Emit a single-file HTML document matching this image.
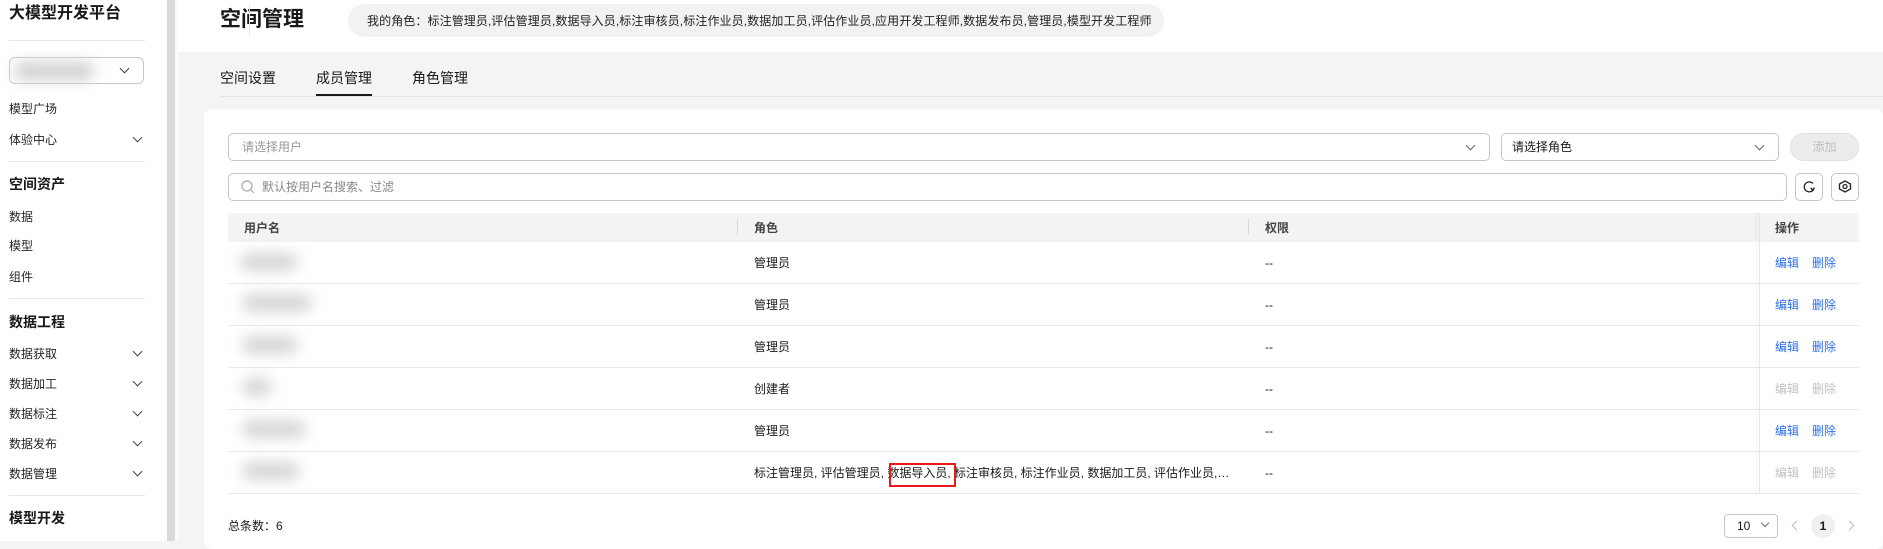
<!DOCTYPE html>
<html><head><meta charset="utf-8"><style>
*{margin:0;padding:0;box-sizing:border-box}
body{width:1883px;height:541px;overflow:hidden;background:#f4f4f4;font-family:"Liberation Sans","Noto Sans CJK SC",sans-serif;color:#191919;position:relative}
.a{position:absolute}
.sb{left:0;top:0;width:167px;height:541px;background:#fff}
.bar{left:167px;top:0;width:8px;height:541px;background:#dadada}
.bar2{left:175px;top:0;width:4px;height:541px;background:#fbfbfb}
.it{position:absolute;left:9px;font-size:12px;line-height:16px;color:#252525}
.gp{position:absolute;left:9px;font-size:14px;font-weight:bold;line-height:18px}
.dv{position:absolute;left:9px;width:136px;height:1px;background:#e6e6e6}
.chev{position:absolute;width:7px;height:7px;border-right:1.3px solid #444;border-bottom:1.3px solid #444;transform:rotate(45deg)}
.hdr{left:179px;top:0;width:1704px;height:52px;background:#fff}
.ln{position:absolute;height:1px;background:#e9e9e9}
.blur{position:absolute;height:18px;background:#d6d6d6;filter:blur(7px);border-radius:9px}
.cell{position:absolute;font-size:12px;line-height:16px}
.ed{position:absolute;font-size:12px;line-height:16px;color:#2b6ff0}
.dis{color:#c2c2c2}
</style></head><body>
<div class="a sb">
 <div class="a" style="left:9px;top:4px;font-size:16px;font-weight:bold;line-height:20px">大模型开发平台</div>
 <div class="dv" style="top:40px"></div>
 <div class="a" style="left:9px;top:57px;width:135px;height:27px;border:1px solid #c8c8c8;border-radius:6px"></div>
 <div class="blur" style="left:14px;top:61px;width:80px;height:20px;background:#d4d4d4"></div>
 <div class="chev" style="left:121px;top:65px"></div>
 <div class="it" style="top:101px">模型广场</div>
 <div class="it" style="top:132px">体验中心</div><div class="chev" style="left:134px;top:134px"></div>
 <div class="dv" style="top:161px"></div>
 <div class="gp" style="top:175px">空间资产</div>
 <div class="it" style="top:209px">数据</div>
 <div class="it" style="top:238px">模型</div>
 <div class="it" style="top:269px">组件</div>
 <div class="dv" style="top:298px"></div>
 <div class="gp" style="top:313px">数据工程</div>
 <div class="it" style="top:346px">数据获取</div><div class="chev" style="left:134px;top:348px"></div>
 <div class="it" style="top:376px">数据加工</div><div class="chev" style="left:134px;top:378px"></div>
 <div class="it" style="top:406px">数据标注</div><div class="chev" style="left:134px;top:408px"></div>
 <div class="it" style="top:436px">数据发布</div><div class="chev" style="left:134px;top:438px"></div>
 <div class="it" style="top:466px">数据管理</div><div class="chev" style="left:134px;top:468px"></div>
 <div class="dv" style="top:495px"></div>
 <div class="gp" style="top:509px">模型开发</div>
</div>
<div class="a bar"></div><div class="a bar2"></div>
<div class="a hdr"></div>
<div class="a" style="left:220px;top:6px;font-size:21px;font-weight:bold;line-height:27px">空间管理</div>
<div class="a" style="left:249px;top:5px;width:1px;height:30px;background:#e3e3e3"></div>
<div class="a" style="left:348px;top:4px;width:816px;height:33px;background:#f2f2f2;border-radius:17px"></div>
<div class="a" style="left:367px;top:13px;font-size:12px;line-height:16px;white-space:nowrap;color:#222;letter-spacing:0.1px">我的角色：标注管理员,评估管理员,数据导入员,标注审核员,标注作业员,数据加工员,评估作业员,应用开发工程师,数据发布员,管理员,模型开发工程师</div>
<div class="a" style="left:220px;top:69px;font-size:14px;line-height:18px">空间设置</div>
<div class="a" style="left:316px;top:69px;font-size:14px;line-height:18px">成员管理</div>
<div class="a" style="left:412px;top:69px;font-size:14px;line-height:18px">角色管理</div>
<div class="ln" style="left:220px;top:96px;width:1663px;background:#e6e6e6"></div>
<div class="a" style="left:316px;top:94px;width:56px;height:2px;background:#191919"></div>
<div class="a" style="left:204px;top:109px;width:1679px;height:440px;background:#fff;border-radius:8px"></div>
<div class="a" style="left:228px;top:133px;width:1262px;height:28px;border:1px solid #c6c6c6;border-radius:5px"></div>
<div class="a" style="left:242px;top:140px;font-size:12px;color:#999;line-height:14px">请选择用户</div>
<div class="chev" style="left:1467px;top:142px;border-color:#666"></div>
<div class="a" style="left:1501px;top:133px;width:278px;height:28px;border:1px solid #c6c6c6;border-radius:5px"></div>
<div class="a" style="left:1512px;top:140px;font-size:12px;line-height:14px">请选择角色</div>
<div class="chev" style="left:1756px;top:142px;border-color:#666"></div>
<div class="a" style="left:1790px;top:133px;width:69px;height:28px;background:#ececec;border:1px solid #e0e0e0;border-radius:14px;font-size:12px;color:#bdbdbd;text-align:center;line-height:26px">添加</div>
<div class="a" style="left:228px;top:173px;width:1559px;height:28px;border:1px solid #c6c6c6;border-radius:5px"></div>
<svg class="a" style="left:241px;top:180px" width="14" height="14"><circle cx="6" cy="6" r="5" fill="none" stroke="#aaa" stroke-width="1.2"/><path d="M10 10l3 3" stroke="#aaa" stroke-width="1.2"/></svg>
<div class="a" style="left:262px;top:180px;font-size:12px;color:#888;line-height:14px">默认按用户名搜索、过滤</div>
<div class="a" style="left:1795px;top:173px;width:28px;height:28px;border:1px solid #c6c6c6;border-radius:5px"></div>
<svg class="a" style="left:1801px;top:179px" width="16" height="16"><path d="M13 9.5A5 5 0 1 1 12 4.5" fill="none" stroke="#222" stroke-width="1.3"/><path d="M13.5 8.5l-2 2.5-1.8-2.2" fill="none" stroke="#222" stroke-width="1.3"/></svg>
<div class="a" style="left:1831px;top:173px;width:28px;height:28px;border:1px solid #c6c6c6;border-radius:5px"></div>
<svg class="a" style="left:1837px;top:179px" width="16" height="16"><path d="M5.5 2h5l3 5.5-3 5.5h-5l-3-5.5z" transform="rotate(90 8 7.5)" fill="none" stroke="#222" stroke-width="1.3"/><circle cx="8" cy="7.5" r="2" fill="none" stroke="#222" stroke-width="1.3"/></svg>
<div class="a" style="left:228px;top:213px;width:1631px;height:29px;background:#f3f3f3"></div>
<div class="a" style="left:737px;top:219px;width:1px;height:16px;background:#d8d8d8"></div>
<div class="a" style="left:1248px;top:219px;width:1px;height:16px;background:#d8d8d8"></div>
<div class="cell" style="left:244px;top:220px;font-weight:bold;color:#444">用户名</div>
<div class="cell" style="left:754px;top:220px;font-weight:bold;color:#444">角色</div>
<div class="cell" style="left:1265px;top:220px;font-weight:bold;color:#444">权限</div>
<div class="cell" style="left:1775px;top:220px;font-weight:bold;color:#444">操作</div>
<div class="ln" style="left:228px;top:283px;width:1631px"></div>
<div class="ln" style="left:228px;top:325px;width:1631px"></div>
<div class="ln" style="left:228px;top:367px;width:1631px"></div>
<div class="ln" style="left:228px;top:409px;width:1631px"></div>
<div class="ln" style="left:228px;top:451px;width:1631px"></div>
<div class="ln" style="left:228px;top:493px;width:1631px"></div>
<div class="a" style="left:1759px;top:213px;width:1px;height:281px;box-shadow:-3px 0 5px rgba(0,0,0,.12);background:#e6e6e6"></div>
<div class="blur" style="left:240px;top:253px;width:58px"></div>
<div class="blur" style="left:242px;top:294px;width:70px"></div>
<div class="blur" style="left:242px;top:336px;width:56px"></div>
<div class="blur" style="left:242px;top:378px;width:30px"></div>
<div class="blur" style="left:242px;top:420px;width:64px"></div>
<div class="blur" style="left:242px;top:462px;width:58px"></div>
<div class="cell" style="left:754px;top:255px">管理员</div>
<div class="cell" style="left:754px;top:297px">管理员</div>
<div class="cell" style="left:754px;top:339px">管理员</div>
<div class="cell" style="left:754px;top:381px">创建者</div>
<div class="cell" style="left:754px;top:423px">管理员</div>
<div class="cell" style="left:754px;top:465px;width:476px;white-space:nowrap;overflow:hidden;text-overflow:ellipsis">标注管理员, 评估管理员, 数据导入员, 标注审核员, 标注作业员, 数据加工员, 评估作业员, 应用开发工程师</div>
<div class="a" style="left:889px;top:463px;width:67px;height:24px;border:2px solid #e8181c"></div>
<div class="cell" style="left:1265px;top:255px">--</div>
<div class="cell" style="left:1265px;top:297px">--</div>
<div class="cell" style="left:1265px;top:339px">--</div>
<div class="cell" style="left:1265px;top:381px">--</div>
<div class="cell" style="left:1265px;top:423px">--</div>
<div class="cell" style="left:1265px;top:465px">--</div>
<div class="ed" style="left:1775px;top:255px">编辑</div><div class="ed" style="left:1812px;top:255px">删除</div>
<div class="ed" style="left:1775px;top:297px">编辑</div><div class="ed" style="left:1812px;top:297px">删除</div>
<div class="ed" style="left:1775px;top:339px">编辑</div><div class="ed" style="left:1812px;top:339px">删除</div>
<div class="ed dis" style="left:1775px;top:381px">编辑</div><div class="ed dis" style="left:1812px;top:381px">删除</div>
<div class="ed" style="left:1775px;top:423px">编辑</div><div class="ed" style="left:1812px;top:423px">删除</div>
<div class="ed dis" style="left:1775px;top:465px">编辑</div><div class="ed dis" style="left:1812px;top:465px">删除</div>
<div class="cell" style="left:228px;top:518px">总条数：6</div>
<div class="a" style="left:1724px;top:514px;width:54px;height:24px;border:1px solid #c6c6c6;border-radius:4px"></div>
<div class="cell" style="left:1737px;top:518px">10</div>
<div class="chev" style="left:1762px;top:520px;width:6px;height:6px;border-color:#666"></div>
<div class="chev" style="left:1793px;top:522px;width:7px;height:7px;transform:rotate(135deg);border-color:#bbb"></div>
<div class="a" style="left:1811px;top:514px;width:24px;height:24px;border-radius:12px;background:#f0f0f0;font-size:12px;font-weight:bold;text-align:center;line-height:24px">1</div>
<div class="chev" style="left:1846px;top:522px;width:7px;height:7px;transform:rotate(-45deg);border-color:#bbb"></div>
</body></html>
